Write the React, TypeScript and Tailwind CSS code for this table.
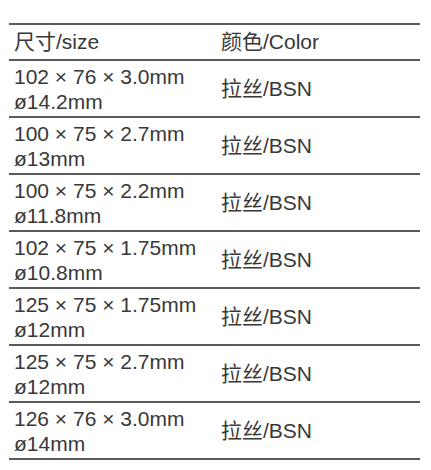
import React from 'react';

const rows = [
  { size: '102 × 76 × 3.0mm', dia: 'ø14.2mm' },
  { size: '100 × 75 × 2.7mm', dia: 'ø13mm' },
  { size: '100 × 75 × 2.2mm', dia: 'ø11.8mm' },
  { size: '102 × 75 × 1.75mm', dia: 'ø10.8mm' },
  { size: '125 × 75 × 1.75mm', dia: 'ø12mm' },
  { size: '125 × 75 × 2.7mm', dia: 'ø12mm' },
  { size: '126 × 76 × 3.0mm', dia: 'ø14mm' },
];

const App: React.FC = () => {
  return (
    <div
      className="w-[431px] h-[470px] bg-white pt-[23px] pl-[9px] text-[#383838] text-[21px]"
      style={{ fontFamily: '"Liberation Sans", "Noto Sans CJK SC", sans-serif' }}
    >
      <div className="w-[411px] border-t-2 border-[#5a5a5a]">
        <div className="flex h-[36px] items-center border-b-2 border-[#5a5a5a]">
          <div className="w-[206px] pl-[5px]">尺寸/size</div>
          <div className="flex-1 pl-[6px]">颜色/Color</div>
        </div>
        {rows.map((r, i) => (
          <div key={i} className="flex h-[57px] items-center border-b-2 border-[#5a5a5a]">
            <div className="w-[206px] pl-[5px] leading-[25px] whitespace-nowrap">
              <div>{r.size}</div>
              <div>{r.dia}</div>
            </div>
            <div className="flex-1 pl-[6px]">拉丝/BSN</div>
          </div>
        ))}
      </div>
    </div>
  );
};

export default App;
